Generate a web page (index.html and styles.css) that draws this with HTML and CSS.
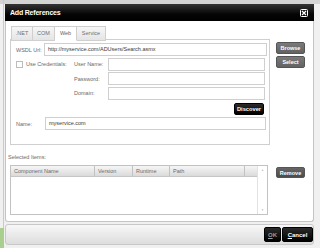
FILE: index.html
```html
<!DOCTYPE html>
<html lang="en">
<head>
    <meta charset="UTF-8">
    <title>Add References</title>
    <link rel="stylesheet" href="styles.css">
</head>
<body>
    <div class="dialog">
        <div class="titlebar">
            <span class="title">Add References</span>
            <svg class="close" width="8" height="8" viewBox="0 0 8 8">
                <rect x="0.5" y="0.5" width="7" height="7" rx="1" fill="none" stroke="#fff" stroke-width="1"/>
                <path d="M2 2 L6 6 M6 2 L2 6" stroke="#fff" stroke-width="1.2"/>
            </svg>
        </div>

        <div class="body">
            <div class="top">
                <div class="tabs-area">
                    <div class="tabs">
                        <div class="tab t-net">.NET</div>
                        <div class="tab t-com">COM</div>
                        <div class="tab t-web active">Web</div>
                        <div class="tab t-svc">Service</div>
                    </div>
                    <div class="panel">
                        <div class="row-url">
                            <label class="lbl lbl-url">WSDL Url:</label>
                            <div class="field">http://myservice.com/ADUsers/Search.asmx</div>
                        </div>
                        <div class="cred">
                            <div class="check-wrap"><span class="check"></span><span class="lbl">Use Credentials:</span></div>
                            <label class="lbl">User Name:</label>
                            <div class="field short"></div>

                            <div></div>
                            <label class="lbl">Password:</label>
                            <div class="field short"></div>

                            <div></div>
                            <label class="lbl">Domain:</label>
                            <div class="field short"></div>
                        </div>
                        <div class="discover-row">
                            <button class="btn-black discover">Discover</button>
                        </div>
                        <div class="row-name">
                            <label class="lbl lbl-name">Name:</label>
                            <div class="field name">myservice.com</div>
                        </div>
                    </div>
                </div>
                <div class="side side-top">
                    <button class="btn-grey">Browse</button>
                    <button class="btn-grey">Select</button>
                </div>
            </div>

            <div class="selected-label">Selected Items:</div>

            <div class="bottom">
                <div class="grid">
                    <div class="grid-head">
                        <div class="col c-name">Component Name</div>
                        <div class="col c-ver">Version</div>
                        <div class="col c-run">Runtime</div>
                        <div class="col c-path">Path</div>
                        <div class="col c-blank"></div>
                    </div>
                    <div class="scroll">
                        <span class="arrow">&#9650;</span>
                        <span class="arrow">&#9660;</span>
                    </div>
                </div>
                <div class="side side-bottom">
                    <button class="btn-grey remove">Remove</button>
                </div>
            </div>
        </div>

        <div class="footer">
            <button class="btn-black ok"><u>O</u>K</button>
            <button class="btn-black cancel"><u>C</u>ancel</button>
        </div>
    </div>
</body>
</html>
```

FILE: styles.css
```css
body {
    margin: 0;
    width: 320px;
    height: 248px;
    overflow: hidden;
    font-family: 'Liberation Sans', Arial, sans-serif;
    background:
        linear-gradient(#a9cf8e, #a9cf8e) 0 228px / 4px 20px no-repeat,
        linear-gradient(#c9c9c9, #c9c9c9) 3px 0 / 1px 248px no-repeat,
        linear-gradient(#d4d4d4, #d4d4d4) 0 0 / 320px 4px no-repeat,
        #f0f0f0;
}

.dialog {
    width: 309px;
    margin: 4px 0 0 5px;
}

.titlebar {
    height: 17px;
    display: flex;
    align-items: center;
    justify-content: space-between;
    padding: 0 6px 0 5px;
    box-sizing: border-box;
    background: linear-gradient(#343434, #050505 60%, #000);
}

.title {
    color: #fff;
    font-weight: bold;
    font-size: 7px;
    letter-spacing: -0.2px;
}

.close {
    display: block;
}

.body {
    height: 201px;
    box-sizing: border-box;
    background: #fff;
    border: 1px solid #c4c4c4;
    border-top: none;
    border-radius: 0 0 3px 3px;
    padding: 5px 7px 0 4px;
}

.top {
    display: grid;
    grid-template-columns: 260px 29px;
    column-gap: 6px;
}

.tabs {
    display: flex;
    height: 14px;
    margin-left: 1px;
    margin-bottom: -1px;
    position: relative;
    z-index: 1;
}

.tab {
    box-sizing: border-box;
    height: 15px;
    border: 1px solid #cfcfcf;
    border-left: none;
    background: linear-gradient(#f7f7f7, #e4e4e4);
    color: #6f6f6f;
    font-size: 5.5px;
    line-height: 13px;
    text-align: center;
}

.t-net { width: 22px; border-left: 1px solid #cfcfcf; }
.t-com { width: 22px; }
.t-web { width: 22px; }
.t-svc { width: 29px; }

.tab.active {
    background: #fff;
    border-bottom-color: #fff;
    color: #5f5f5f;
}

.panel {
    height: 106px;
    box-sizing: border-box;
    border: 1px solid #cfcfcf;
    padding: 3px 2px 0 5px;
}

.lbl {
    font-size: 5.5px;
    color: #6a6a6a;
    white-space: nowrap;
}

.field {
    box-sizing: border-box;
    height: 13px;
    border: 1px solid #cfcfcf;
    font-size: 5.5px;
    line-height: 11px;
    padding-left: 3px;
    color: #3a3a3a;
}

.row-url {
    display: flex;
    align-items: center;
}

.lbl-url { width: 28px; flex: none; }

.row-url .field { flex: 1; }

.cred {
    display: grid;
    grid-template-columns: 58px 34px 1fr;
    grid-auto-rows: 13px;
    row-gap: 1.5px;
    margin-top: 1.5px;
    align-items: center;
}

.field.short {
    margin-right: 2px;
}

.check-wrap {
    display: flex;
    align-items: center;
    gap: 3px;
}

.check {
    width: 7px;
    height: 7px;
    box-sizing: border-box;
    border: 1px solid #bdbdbd;
    background: #fff;
}

.discover-row {
    display: flex;
    justify-content: flex-end;
    margin-top: 3.5px;
    padding-right: 3px;
}

button {
    font-family: 'Liberation Sans', Arial, sans-serif;
    padding: 0;
    cursor: pointer;
}

.btn-black {
    background: linear-gradient(#2b2b2b, #000);
    border: 1px solid #000;
    border-radius: 2px;
    color: #fff;
    font-weight: bold;
    font-size: 5.7px;
}

.discover {
    width: 30px;
    height: 12px;
}

.row-name {
    display: flex;
    align-items: center;
    margin-top: 2px;
}

.lbl-name { width: 29px; flex: none; }

.field.name {
    flex: 1;
    margin-right: 1px;
}

.side {
    display: flex;
    flex-direction: column;
    gap: 2px;
}

.side-top {
    padding-top: 16px;
}

.btn-grey {
    height: 12px;
    width: 29px;
    background: linear-gradient(#7a7a7a, #626262);
    border: 1px solid #555;
    border-radius: 2px;
    color: #fff;
    font-weight: bold;
    font-size: 5.5px;
}

.remove {
    height: 11px;
    background: linear-gradient(#666, #4c4c4c);
}

.selected-label {
    height: 10px;
    line-height: 10px;
    margin: 7px 0 0 -2px;
    font-size: 5.5px;
    color: #6a6a6a;
}

.bottom {
    display: grid;
    grid-template-columns: 258px 29px;
    column-gap: 8px;
    margin-top: 3px;
}

.grid {
    height: 50px;
    box-sizing: border-box;
    border: 1px solid #c2c2c2;
    display: flex;
}

.grid-head {
    flex: 1;
    display: flex;
    height: 11px;
    box-sizing: border-box;
    background: linear-gradient(#f6f6f6, #dadada);
    border-bottom: 1px solid #c6c6c6;
}

.col {
    box-sizing: border-box;
    border-right: 1px solid #c2c2c2;
    font-size: 5.5px;
    line-height: 10px;
    color: #6a6a6a;
    padding-left: 3px;
}

.c-name { width: 84px; }
.c-ver { width: 38px; }
.c-run { width: 37px; }
.c-path { width: 75px; }
.c-blank { flex: 1; border-right: none; }

.scroll {
    width: 9px;
    display: flex;
    flex-direction: column;
    justify-content: space-between;
    align-items: center;
    border-left: 1px solid #e2e2e2;
    padding: 2px 0;
}

.arrow {
    font-size: 3px;
    color: #bbb;
    line-height: 4px;
}

.side-bottom {
    padding-top: 2px;
}

.footer {
    height: 21px;
    margin-top: 2px;
    box-sizing: border-box;
    border: 1px solid #c8c8c8;
    border-radius: 3px;
    background: linear-gradient(#f7f7f7, #dddddd);
    display: flex;
    justify-content: flex-end;
    gap: 1px;
    padding: 2px 0 0;
}

.ok, .cancel {
    height: 15px;
    font-size: 6px;
}

.ok {
    width: 17px;
    color: #9a9a9a;
}

.cancel {
    width: 31px;
}
```
